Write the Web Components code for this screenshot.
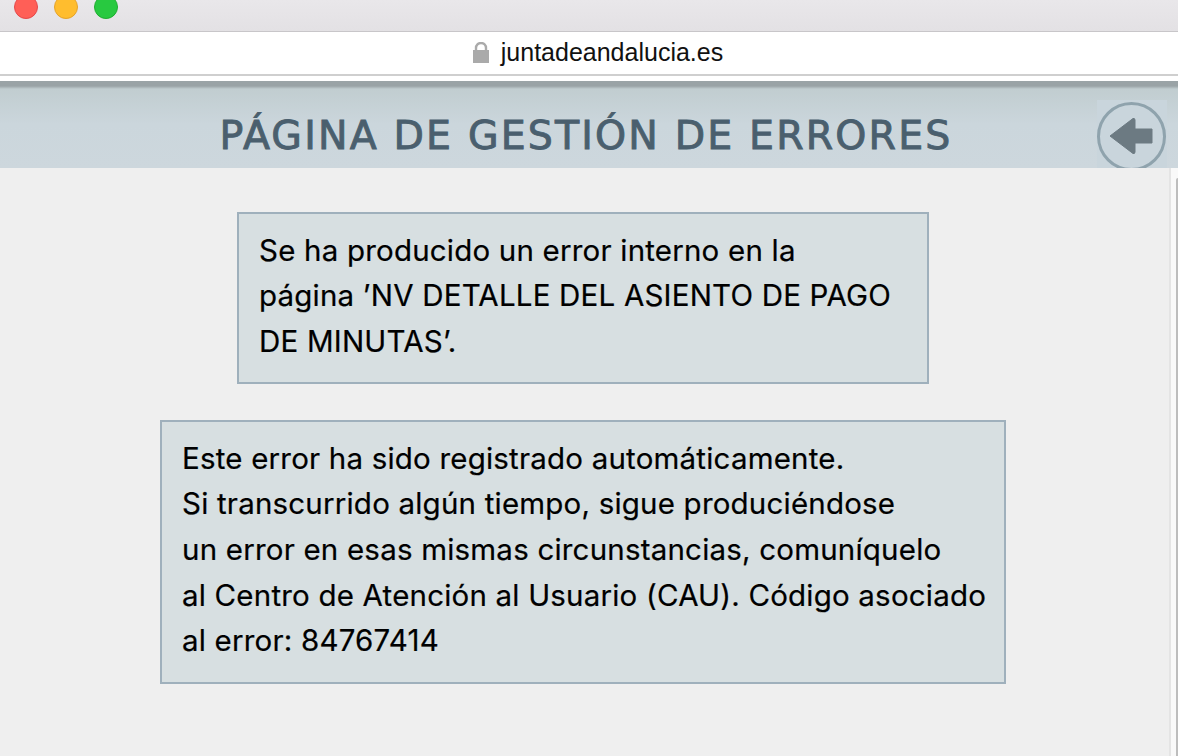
<!DOCTYPE html>
<html>
<head>
<meta charset="utf-8">
<title>Error</title>
<style>
  html, body { margin: 0; height: 100%; overflow: hidden; background: #efefef; }
</style>
</head>
<body>
<error-page>
  <browser-chrome slot="chrome" host-name="juntadeandalucia.es"></browser-chrome>
  <error-header slot="header">PÁGINA DE GESTIÓN DE ERRORES</error-header>
  <message-box style="--box-width:692px">Se ha producido un error interno en la<br>página ’NV DETALLE DEL ASIENTO DE PAGO<br>DE MINUTAS’.</message-box>
  <message-box style="--box-width:846px">Este error ha sido registrado automáticamente.<br>Si transcurrido algún tiempo, sigue produciéndose<br>un error en esas mismas circunstancias, comuníquelo<br>al Centro de Atención al Usuario (CAU). Código asociado<br>al error: 84767414</message-box>
</error-page>
<script>
class ErrorPage extends HTMLElement {
  constructor() {
    super();
    this.attachShadow({ mode: "open" }).innerHTML = `
      <style>
        :host { display: flex; flex-direction: column; height: 756px; font-family: Inter, "Liberation Sans", sans-serif; }
        .main { flex: 1; display: flex; }
        .content { flex: 1; display: flex; flex-direction: column; align-items: center; gap: 36px; padding: 44px 3px 0 0; }
        .track { width: 7px; border-left: 2px solid #e4e4e4; background: #f9f9f9; padding-top: 10px; }
        .thumb { margin-left: 5px; height: 100%; background: #bdbdbd; border-radius: 2px 0 0 0; }
      </style>
      <slot name="chrome"></slot>
      <slot name="header"></slot>
      <div class="main">
        <div class="content"><slot></slot></div>
        <div class="track"><div class="thumb"></div></div>
      </div>
    `;
  }
}
class BrowserChrome extends HTMLElement {
  constructor() {
    super();
    const name = this.getAttribute("host-name");
    this.attachShadow({ mode: "open" }).innerHTML = `
      <style>
        :host { display: block; }
        .title { height: 31px; background: linear-gradient(#e9e7ea, #e3e1e4); border-bottom: 1px solid #c8c6c9; display: flex; gap: 16px; padding-left: 14px; }
        .dot { width: 24px; height: 24px; border-radius: 50%; margin-top: -5px; box-sizing: border-box; }
        .red { background: #ff5f57; border: 1px solid #e5484a; }
        .yellow { background: #ffbd2e; border: 1px solid #e5a32a; }
        .green { background: #28c940; border: 1px solid #1fad30; }
        .url { height: 40px; padding-bottom: 2px; background: #fff; border-bottom: 2px solid #cfcfcf; display: flex; align-items: center; justify-content: center; gap: 12px; padding-left: 18px; font: 25px "Liberation Sans", sans-serif; color: #111; }
        svg { display: block; }
        .gap { height: 5px; background: #fff; }
      </style>
      <div class="title">
        <div class="dot red"></div><div class="dot yellow"></div><div class="dot green"></div>
      </div>
      <div class="url">
        <svg width="16" height="21" viewBox="0 0 16 21"><path d="M3 9V6a5 5 0 0 1 10 0V9" fill="none" stroke="#aaa" stroke-width="2.4"/><rect y="8" width="16" height="13" fill="#aaa"/></svg>
        <span>${name}</span>
      </div>
      <div class="gap"></div>
    `;
  }
}
class ErrorHeader extends HTMLElement {
  constructor() {
    super();
    this.attachShadow({ mode: "open" }).innerHTML = `
      <style>
        :host { display: block; position: relative; height: 87px; overflow: hidden; background: linear-gradient(#9aa3a6 0, #9aa3a6 5px, #c1cdd0 8px, #cbd6dc 50%, #cdd7dd 100%); }
        .text { display: block; text-align: center; padding: 28px 6px 0 0; font-family: "DejaVu Sans", sans-serif; font-size: 39.5px; line-height: 52px; letter-spacing: 2.15px; font-weight: 400; -webkit-text-stroke: 0.9px #4a5f6e; color: #4a5f6e; white-space: nowrap; }
        .back { position: absolute; left: 1096px; top: 19px; }
      </style>
      <span class="text"><slot></slot></span>
      <svg class="back" width="72" height="68" viewBox="0 0 72 68">
        <rect x="1" width="70" height="68" fill="#c9d5dc"/>
        <circle cx="35.5" cy="36.5" r="33" fill="none" stroke="#8fa3ad" stroke-width="3"/>
        <path d="M14 36 L37 18.5 Q39 18 39 20 V29 H56 V43 H39 V52 Q39 54 37 53.5 Z" fill="#6c7a82" stroke="#6c7a82" stroke-linejoin="round" stroke-width="1"/>
      </svg>
    `;
  }
}
class MessageBox extends HTMLElement {
  constructor() {
    super();
    this.attachShadow({ mode: "open" }).innerHTML = `
      <style>
        :host { display: block; box-sizing: border-box; width: var(--box-width); background: #d7dfe1; border: 2px solid #9fb0bc; padding: 13.5px 20px 18px; font-size: 29.5px; line-height: 45.6px; letter-spacing: 0.2px; -webkit-text-stroke: 0.2px #000; color: #000; white-space: nowrap; }
      </style>
      <slot></slot>
    `;
  }
}
customElements.define("error-page", ErrorPage);
customElements.define("browser-chrome", BrowserChrome);
customElements.define("error-header", ErrorHeader);
customElements.define("message-box", MessageBox);
</script>
</body>
</html>
